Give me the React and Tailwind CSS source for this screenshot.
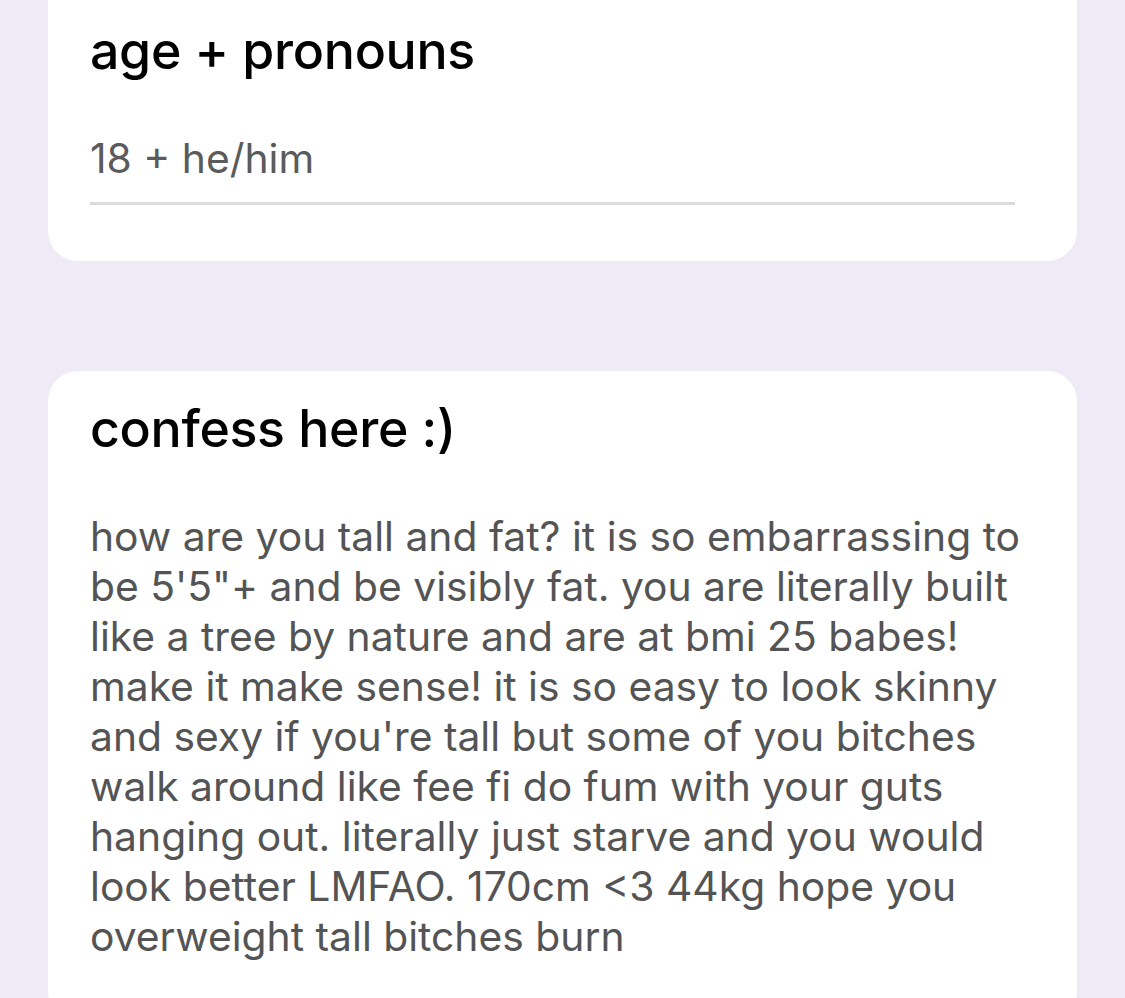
export default function App() {
  const lines = [
    "how are you tall and fat? it is so embarrassing to",
    "be 5'5\"+ and be visibly fat. you are literally built",
    "like a tree by nature and are at bmi 25 babes!",
    "make it make sense! it is so easy to look skinny",
    "and sexy if you're tall but some of you bitches",
    "walk around like fee fi do fum with your guts",
    "hanging out. literally just starve and you would",
    "look better LMFAO. 170cm <3 44kg hope you",
    "overweight tall bitches burn",
  ];
  return (
    <div
      className="w-[1125px] h-[998px] overflow-hidden bg-[#eeeaf6] px-[48px]"
      style={{ fontFamily: "Inter, 'Noto Sans', sans-serif" }}
    >
      {/* age + pronouns field */}
      <div className="-mt-[40px] w-[1029px] rounded-[30px] bg-white pt-[60px] pl-[42px] pr-[62px] pb-[56px]">
        <div className="text-[51.8px] leading-[60px] font-medium text-black tracking-[-0.3px] whitespace-nowrap">
          age + pronouns
        </div>
        <div className="mt-[54px] text-[40.8px] leading-[48px] text-[#5b5b5b] whitespace-nowrap">
          18 + he/him
        </div>
        <div className="mt-[20px] h-[3px] bg-[#dcdcdc]" />
      </div>

      {/* confession field */}
      <div className="mt-[110px] w-[1029px] rounded-[30px] bg-white pt-[27px] pl-[42px] pr-[20px] pb-[60px]">
        <div className="text-[51.8px] leading-[60px] font-medium text-black tracking-[-0.3px] whitespace-nowrap">
          confess here :)
        </div>
        <div className="mt-[53px] text-[40.8px] leading-[50px] text-[#545454]">
          {lines.map((l, i) => (
            <div key={i} className="whitespace-nowrap">
              {l}
            </div>
          ))}
        </div>
      </div>
    </div>
  );
}
